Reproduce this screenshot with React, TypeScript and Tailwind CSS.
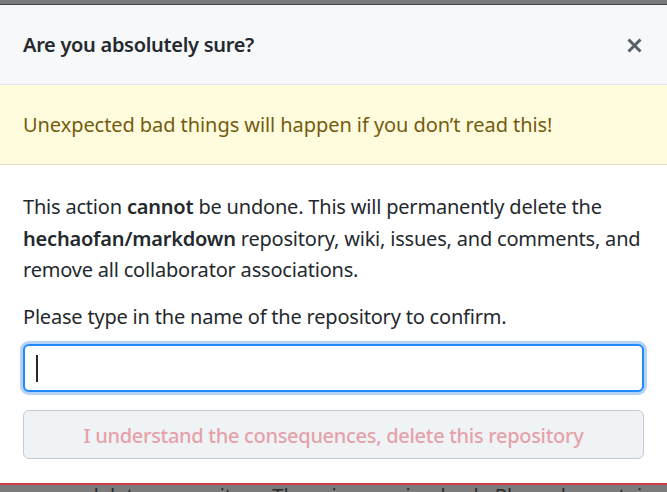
const font = { fontFamily: '"Noto Sans", "Open Sans", sans-serif' }

function CloseIcon() {
  return (
    <svg width="15" height="15" viewBox="0 0 15 15" fill="none" stroke="currentColor" strokeWidth="3" strokeLinecap="butt">
      <path d="M1.5 1.5l12 12M13.5 1.5l-12 12" />
    </svg>
  )
}

export default function App() {
  return (
    <div className="flex h-[492px] w-[667px] flex-col overflow-hidden bg-[#7b7b7b]" style={font}>
      {/* 背后的页面遮罩 */}
      <div className="h-[5px] shrink-0 border-b border-[#3f4448] bg-[#7b7b7b]" />

      {/* 对话框 */}
      <div className="flex shrink-0 flex-col bg-white">
        <div className="flex h-[80px] items-center justify-between border-b border-[#e1e4e8] bg-[#f6f8fa] px-[23px]">
          <h3 className="text-[20px] font-semibold tracking-[-0.3px] text-[#24292e]">Are you absolutely sure?</h3>
          <button className="mr-[2px] mt-[1px] text-[#586069]">
            <CloseIcon />
          </button>
        </div>

        <div className="flex h-[80px] items-center border-b border-[#e6dfbd] bg-[#fffbdd] px-[23px] text-[20px] tracking-[-0.07px] text-[#735c0f]">
          Unexpected bad things will happen if you don’t read this!
        </div>

        <div className="px-[23px] pt-[26px] pb-[24px] text-[20px] leading-[31.5px] tracking-[-0.2px] text-[#24292e]">
          <p className="mb-[15px]">
            This action <b className="font-semibold">cannot</b> be undone. This will permanently delete the
            <br />
            <b className="font-semibold">hechaofan/markdown</b> repository, wiki, issues, and comments, and
            <br />
            remove all collaborator associations.
          </p>
          <p className="mb-[12px]">Please type in the name of the repository to confirm.</p>

          <div className="flex h-[48px] items-center rounded-[6px] border-2 border-[#2188ff] bg-white px-[11px] shadow-[0_0_0_3px_#b4d2f5]">
            <span className="h-[27px] w-[2px] bg-[#24292e]" />
          </div>

          <button
            disabled
            className="mt-[18px] flex h-[49px] w-full items-center justify-center rounded-[6px] border border-[#c6c9cd] bg-[#eff3f6] pt-[2px] text-[20px] font-medium tracking-[-0.3px] text-[#e6a1a9]"
          >
            I understand the consequences, delete this repository
          </button>
        </div>
      </div>

      {/* 下方危险区 */}
      <div className="h-[2px] shrink-0 bg-[#d03a4b]" />
      <div className="-ml-[4px] whitespace-nowrap pt-[1px] text-[20px] leading-[20px] text-[#2b2b2b]">
        once you delete a repository. There is no going back. Please be certain.
      </div>
    </div>
  )
}
